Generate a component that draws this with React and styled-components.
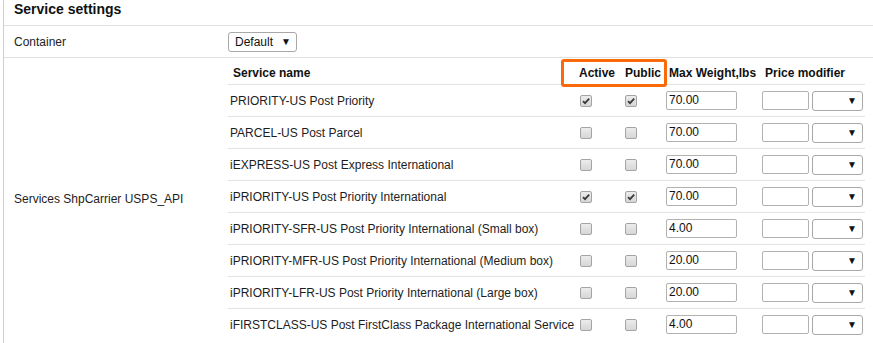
import styled, { createGlobalStyle } from "styled-components";

const services = [
  { name: "PRIORITY-US Post Priority", active: true, pub: true, weight: "70.00" },
  { name: "PARCEL-US Post Parcel", active: false, pub: false, weight: "70.00" },
  { name: "iEXPRESS-US Post Express International", active: false, pub: false, weight: "70.00" },
  { name: "iPRIORITY-US Post Priority International", active: true, pub: true, weight: "70.00" },
  { name: "iPRIORITY-SFR-US Post Priority International (Small box)", active: false, pub: false, weight: "4.00" },
  { name: "iPRIORITY-MFR-US Post Priority International (Medium box)", active: false, pub: false, weight: "20.00" },
  { name: "iPRIORITY-LFR-US Post Priority International (Large box)", active: false, pub: false, weight: "20.00" },
  { name: "iFIRSTCLASS-US Post FirstClass Package International Service", active: false, pub: false, weight: "4.00" },
];

export default function App() {
  return (
    <>
      <GlobalStyle />
      <Panel>
        <Title>Service settings</Title>
        <SettingRow>
          <Label>Container</Label>
          <Value>
            <Select width={69}>
              <span>Default</span>
              <Arrow>▼</Arrow>
            </Select>
          </Value>
        </SettingRow>
        <SettingRow last>
          <Label>Services ShpCarrier USPS_API</Label>
          <ServiceTable>
            <HeaderRow>
              <Head pad={5}>Service name</Head>
              <Head pad={1}>Active</Head>
              <Head pad={3}>Public</Head>
              <Head pad={3}>Max Weight,lbs</Head>
              <Head pad={3}>Price modifier</Head>
            </HeaderRow>
            {services.map((s, i) => (
              <Row key={s.name} last={i === services.length - 1}>
                <Cell pad={2}>{s.name}</Cell>
                <Cell pad={2}>
                  <Check checked={s.active} />
                </Cell>
                <Cell pad={3}>
                  <Check checked={s.pub} />
                </Cell>
                <Cell pad={0}>
                  <TextBox width={71}>{s.weight}</TextBox>
                </Cell>
                <Cell pad={0}>
                  <TextBox width={47} />
                  <Select width={51}>
                    <span />
                    <Arrow>▼</Arrow>
                  </Select>
                </Cell>
              </Row>
            ))}
            <Highlight />
          </ServiceTable>
        </SettingRow>
      </Panel>
    </>
  );
}

function Check({ checked }) {
  return (
    <Box>
      {checked && (
        <svg width="10" height="10" viewBox="0 0 10 10">
          <path d="M2 5.2 L4 7.2 L8.2 2.6" fill="none" stroke="#3a3a3a" strokeWidth="1.8" />
        </svg>
      )}
    </Box>
  );
}

const GlobalStyle = createGlobalStyle`
  body {
    margin: 0;
    background: #ffffff;
    font-family: "Liberation Sans", Arial, sans-serif;
    font-size: 12px;
    color: #1d1d1d;
  }
`;

const Panel = styled.div`
  margin-left: 3px;
  border-left: 1px solid #c9d0d8;
  height: 343px;
  overflow: hidden;
`;

const Title = styled.div`
  height: 26px;
  box-sizing: border-box;
  padding: 1px 0 0 10px;
  line-height: 16px;
  font-size: 14px;
  font-weight: bold;
  color: #111111;
  border-bottom: 1px solid #e0e0e0;
`;

const SettingRow = styled.div`
  display: grid;
  grid-template-columns: 224px 1fr;
  align-items: center;
  min-height: 31px;
  border-bottom: ${(p) => (p.last ? "none" : "1px solid #e0e0e0")};
`;

const Label = styled.div`
  padding-left: 10px;
`;

const Value = styled.div`
  display: flex;
  align-items: center;
`;

const Select = styled.div`
  width: ${(p) => p.width}px;
  height: 20px;
  box-sizing: border-box;
  display: flex;
  align-items: center;
  justify-content: space-between;
  padding: 0 5px 0 6px;
  border: 1px solid #a8a8a8;
  border-radius: 3px;
  background: #ffffff;
  color: #111111;
`;

const Arrow = styled.span`
  font-size: 10px;
  color: #111111;
`;

const ServiceTable = styled.div`
  position: relative;
  width: 637px;
`;

const grid = `
  display: grid;
  grid-template-columns: 350px 44px 44px 96px 103px;
  align-items: center;
`;

const HeaderRow = styled.div`
  ${grid}
  height: 23px;
  padding-top: 3px;
  border-bottom: 1px solid #e3e3e3;
`;

const Row = styled.div`
  ${grid}
  height: 31px;
  border-bottom: ${(p) => (p.last ? "none" : "1px solid #e3e3e3")};
`;

const Head = styled.div`
  padding-left: ${(p) => p.pad}px;
  font-weight: bold;
  color: #111111;
  white-space: nowrap;
`;

const Cell = styled.div`
  display: flex;
  align-items: center;
  gap: 3px;
  padding-left: ${(p) => p.pad}px;
  white-space: nowrap;
`;

const Box = styled.span`
  width: 12px;
  height: 12px;
  box-sizing: border-box;
  display: flex;
  align-items: center;
  justify-content: center;
  border: 1px solid #a4a4a4;
  border-radius: 2px;
  background: linear-gradient(#ececec, #d6d6d6);
`;

const TextBox = styled.div`
  width: ${(p) => p.width}px;
  height: 19px;
  box-sizing: border-box;
  padding: 0 2px;
  line-height: 17px;
  border: 1px solid #b2b2b2;
  border-radius: 2px;
  background: #ffffff;
  color: #111111;
`;

const Highlight = styled.div`
  position: absolute;
  left: 333px;
  top: 1px;
  width: 106px;
  height: 28px;
  box-sizing: border-box;
  border: 3px solid #fa6a0a;
  border-radius: 3px;
  pointer-events: none;
`;
